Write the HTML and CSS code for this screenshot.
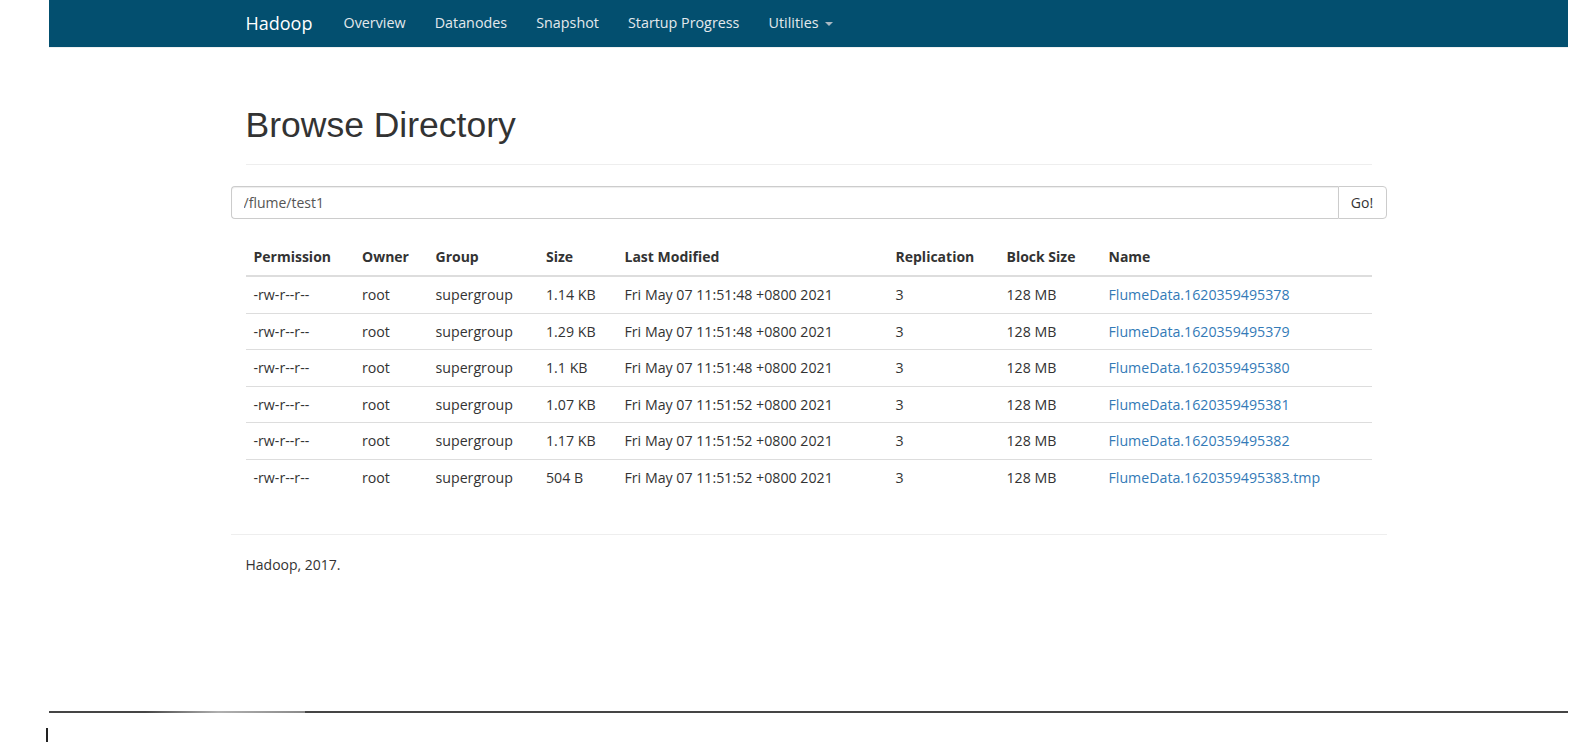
FILE: index.html
```html
<!DOCTYPE html>
<html>
<head>
<meta charset="utf-8">
<title>Browsing HDFS</title>
<link rel="stylesheet" href="styles.css">
</head>
<body>
<div class="page">
  <header class="navbar">
    <div class="nav-inner">
      <a class="brand" href="#">Hadoop</a>
      <ul class="nav">
        <li><a href="#">Overview</a></li>
        <li><a href="#">Datanodes</a></li>
        <li><a href="#">Snapshot</a></li>
        <li><a href="#">Startup Progress</a></li>
        <li><a href="#">Utilities <b class="caret"></b></a></li>
      </ul>
    </div>
  </header>
  <div class="navbar-line"></div>

  <main class="container">
    <div class="page-header">
      <h1>Browse Directory</h1>
    </div>

    <div class="row">
      <form class="input-group">
        <input class="form-control" type="text" value="/flume/test1">
        <button class="btn" type="button">Go!</button>
      </form>
    </div>

    <table class="table">
      <colgroup>
        <col class="c-perm"><col class="c-owner"><col class="c-group"><col class="c-size">
        <col class="c-mod"><col class="c-rep"><col class="c-block"><col class="c-name">
      </colgroup>
      <thead>
        <tr><th>Permission</th><th>Owner</th><th>Group</th><th>Size</th><th>Last Modified</th><th>Replication</th><th>Block Size</th><th>Name</th></tr>
      </thead>
      <tbody>
        <tr><td>-rw-r--r--</td><td>root</td><td>supergroup</td><td>1.14 KB</td><td>Fri May 07 11:51:48 +0800 2021</td><td>3</td><td>128 MB</td><td><a href="#">FlumeData.1620359495378</a></td></tr>
        <tr><td>-rw-r--r--</td><td>root</td><td>supergroup</td><td>1.29 KB</td><td>Fri May 07 11:51:48 +0800 2021</td><td>3</td><td>128 MB</td><td><a href="#">FlumeData.1620359495379</a></td></tr>
        <tr><td>-rw-r--r--</td><td>root</td><td>supergroup</td><td>1.1 KB</td><td>Fri May 07 11:51:48 +0800 2021</td><td>3</td><td>128 MB</td><td><a href="#">FlumeData.1620359495380</a></td></tr>
        <tr><td>-rw-r--r--</td><td>root</td><td>supergroup</td><td>1.07 KB</td><td>Fri May 07 11:51:52 +0800 2021</td><td>3</td><td>128 MB</td><td><a href="#">FlumeData.1620359495381</a></td></tr>
        <tr><td>-rw-r--r--</td><td>root</td><td>supergroup</td><td>1.17 KB</td><td>Fri May 07 11:51:52 +0800 2021</td><td>3</td><td>128 MB</td><td><a href="#">FlumeData.1620359495382</a></td></tr>
        <tr><td>-rw-r--r--</td><td>root</td><td>supergroup</td><td>504 B</td><td>Fri May 07 11:51:52 +0800 2021</td><td>3</td><td>128 MB</td><td><a href="#">FlumeData.1620359495383.tmp</a></td></tr>
      </tbody>
    </table>

    <div class="row footer">
      <hr>
      <p>Hadoop, 2017.</p>
    </div>
  </main>
</div>
<div class="cursor-mark"></div>
</body>
</html>
```

FILE: styles.css
```css
* { box-sizing: border-box; }

html, body {
  margin: 0;
  padding: 0;
  background: #fff;
}

body {
  font-family: "Open Sans", "Noto Sans", sans-serif;
  font-size: 14px;
  line-height: 20px;
  color: #333;
  height: 742px;
  overflow: hidden;
}

a { color: #337ab7; text-decoration: none; }

.page {
  margin-left: 49px;
  width: 1519px;
  height: 713px;
  border-bottom: 2px solid transparent;
  border-image: linear-gradient(to right, #454545 0, #454545 97px, #b0b0b0 170px, #8a8a8a 257px, #454545 257px, #454545 100%) 1;
}

/* navbar */
.navbar {
  background: #034f6f;
  height: 47px;
}

.nav-inner {
  width: 1156px;
  margin: 0 auto;
  display: flex;
  align-items: center;
  height: 47px;
  padding-bottom: 2px;
}

.brand {
  color: #fff;
  font-size: 18px;
  line-height: 20px;
  padding: 0 16.5px 0 15px;
}

.nav {
  list-style: none;
  margin: 0;
  padding: 0;
  display: flex;
}

.nav a {
  display: block;
  color: #e3e9ed;
  font-size: 14.3px;
  padding: 0 14.6px;
  line-height: 20px;
}

.caret {
  display: inline-block;
  width: 0;
  height: 0;
  margin-left: 3px;
  vertical-align: middle;
  border-top: 4px solid #a9b8c2;
  border-left: 4px solid transparent;
  border-right: 4px solid transparent;
}

.navbar-line {
  height: 1px;
  background: #eef0f1;
}

/* content */
.container {
  width: 1156px;
  margin: 0 auto;
  padding: 0 15px;
}

.row {
  margin: 0 -15px;
}

.page-header {
  margin: 58px 0 21px;
  padding-bottom: 19px;
  border-bottom: 1px solid #eee;
}

.page-header h1 {
  margin: 0;
  font-family: "Liberation Sans", Arial, sans-serif;
  font-weight: 500;
  font-size: 35.5px;
  line-height: 39px;
  color: #333;
}

.input-group {
  display: flex;
  margin: 0;
  height: 33px;
}

.form-control {
  flex: 1;
  height: 33px;
  margin: 0;
  padding: 6px 12px;
  font-family: inherit;
  font-size: 14px;
  color: #555;
  border: 1px solid #ccc;
  border-right: 0;
  border-radius: 4px 0 0 4px;
  box-shadow: inset 0 1px 1px rgba(0,0,0,.075);
  outline: none;
}

.btn {
  width: 49px;
  height: 33px;
  margin: 0;
  padding: 6px 0;
  font-family: inherit;
  font-size: 14px;
  color: #333;
  background: #fff;
  border: 1px solid #ccc;
  border-radius: 0 4px 4px 0;
}

.table {
  width: 1126px;
  margin: 20px 0 20px;
  border-collapse: collapse;
  border-spacing: 0;
  table-layout: fixed;
}

.c-perm { width: 108.5px; }
.c-owner { width: 73.5px; }
.c-group { width: 110.5px; }
.c-size { width: 78.5px; }
.c-mod { width: 271px; }
.c-rep { width: 111px; }
.c-block { width: 102px; }
.c-name { width: 271px; }

.table th {
  text-align: left;
  font-weight: 700;
  padding: 8px;
  line-height: 20px;
  border-bottom: 2px solid #ddd;
  white-space: nowrap;
}

.table td {
  padding: 8px;
  font-size: 14.2px;
  line-height: 19.5px;
  border-top: 1px solid #ddd;
  white-space: nowrap;
}

.footer {
  display: flow-root;
}

.footer hr {
  margin: 19px 0 20px;
  border: 0;
  border-top: 1px solid #eee;
}

.footer p {
  margin: 0 0 10px;
  padding: 0 15px;
}

.cursor-mark {
  margin: 15px 0 0 46px;
  width: 2px;
  height: 14px;
  background: #222;
}
```
